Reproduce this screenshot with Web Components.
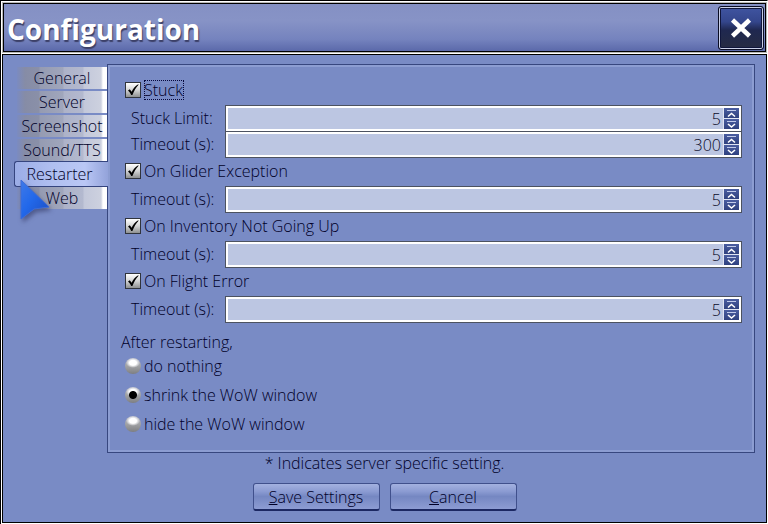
<!DOCTYPE html>
<html lang="en">
<head>
<meta charset="utf-8">
<title>Configuration</title>
<style>
  body { margin: 0; background: #000; color: #000028; font: 300 16px/20px "Open Sans", "Noto Sans", sans-serif; }
</style>
</head>
<body>
<script>
const define = (name, html, setup) => {
  const template = document.createElement('template');
  template.innerHTML = html;
  customElements.define(name, class extends HTMLElement {
    connectedCallback() {
      if (this.shadowRoot) return;
      const root = this.attachShadow({ mode: 'open' });
      root.append(template.content.cloneNode(true));
      if (setup) setup(this, root);
    }
  });
};

define('config-window', `
<style>
  :host { display: flex; flex-direction: column; min-height: 100vh; box-sizing: border-box;
    border: 1px solid #000; border-right-color: #fff; background: #fff; padding: 1px 0 1px 1px; }
  header { display: flex; align-items: center; justify-content: space-between; box-sizing: border-box; height: 49px;
    border: 1px solid #000; outline: 1px solid #b8b8b8; margin: 1px 1px 2px 1px; padding: 0 1px 0 3px;
    background: linear-gradient(#8490c4, #8793c6 35%, #7583be 75%, #5b69aa); }
  h1 { margin: 0; font-weight: 700; font-size: 28px; line-height: 40px; color: #fff; text-shadow: 1px 2px 1px #3c4068; padding-top: 2px; }
  .close { box-sizing: border-box; width: 46px; height: 44px; padding: 0; border: 1px solid #0a0d24; border-radius: 3px;
    box-shadow: inset 0 0 0 1px #c9cfe6, inset 0 0 0 2px #10163c;
    background: linear-gradient(#4055a2, #34468c 35%, #1f2850 55%, #272c42); }
  .close svg { display: block; margin: auto; }
  main { flex: 1; display: flex; flex-direction: column; border: 1px solid #000; background: #798bc5; padding: 9px 11px 11px 11px; }
  .body { flex: 1; display: flex; }
  .note { margin: 0; text-align: center; line-height: 20px; }
  footer { display: flex; justify-content: center; gap: 10px; margin-top: 10px; }
</style>
<header><h1><slot name="title"></slot></h1>
  <button class="close" aria-label="Close"><svg width="24" height="24" viewBox="0 0 24 24"><path d="M3.500 4 20.500 20M20.500 4 3.500 20" stroke="#fff" stroke-width="4.500"/></svg></button>
</header>
<main>
  <div class="body"><slot name="tabs"></slot><slot name="panel"></slot></div>
  <p class="note"><slot name="note"></slot></p>
  <footer><slot name="actions"></slot></footer>
</main>`);

define('tab-list', `
<style>
  :host { display: flex; flex-direction: column; gap: 2px; width: 93px; padding-top: 3px; position: relative; z-index: 1; }
</style><slot></slot>`);

define('tab-item', `
<style>
  :host { display: block; }
  button { display: block; box-sizing: border-box; width: 90px; height: 22px; margin: 0 0 0 3px; padding: 0; border: 0;
    font: inherit; color: inherit; text-align: center;
    background: linear-gradient(90deg, #7b8bc0, #868ca6 8px, #8a90a8 22px, #959bb2 23px, #a0a6bc 46px, #adb2c8 47px, #b3b9cf 66px, #c3c8da 67px, #cdd1df 84px, #fff 86px); }
  :host([selected]) { margin: -2px 0; }
  :host([selected]) button { width: 94px; height: 26px; margin: 0; padding-right: 4px; border: 1px solid #35457f; border-right: 0;
    border-radius: 3px 0 0 3px; background: linear-gradient(90deg, #9badE6, #b0bff0 40%, #bac7f5 75%, #93a3da); }
</style><button role="tab"><slot></slot></button>`);

define('settings-panel', `
<style>
  :host { display: block; flex: 1; box-sizing: border-box; border: 1px solid #37477f;
    box-shadow: inset 0 0 0 2px #8c9dd2; padding: 11px 12px 13px 13px; }
</style><slot></slot>`);

define('check-option', `
<style>
  :host { display: flex; align-items: center; height: 28px; margin-bottom: 1px; padding-left: 4px; gap: 3px; }
  input { appearance: none; flex: none; box-sizing: border-box; width: 16px; height: 16px; margin: 0; border: 1px solid #30343c;
    background: linear-gradient(#fff, #d4d5d5 50%, #8e9090); }
  .box { display: grid; }
  .box > * { grid-area: 1 / 1; }
  svg { pointer-events: none; }
  label { line-height: 20px; padding-right: 1px; }
  :host([focused]) label { outline: 1px dotted #06083c; outline-offset: -1px; }
</style>
<span class="box"><input type="checkbox" id="box" checked>
<svg width="16" height="16" viewBox="0 0 16 16"><path d="M3 8.500 4.800 7.200 6.600 9.800C8.200 6.400 10 4.200 13.200 2.200L13.600 2.800C10.800 5.600 9.200 8.600 7.400 13H6.200C5.400 11.200 4.400 9.800 3 8.500Z" fill="#000"/></svg></span>
<label for="box"><slot></slot></label>`, (host, root) => {
  const mark = root.querySelector('svg');
  root.querySelector('input').onchange = e => { mark.style.visibility = e.target.checked ? 'visible' : 'hidden'; };
});

define('number-field', `
<style>
  :host { display: flex; align-items: center; height: 26px; padding-left: 10px; }
  label { width: 94px; flex: none; }
  .field { flex: 1; display: flex; box-sizing: border-box; height: 27px; margin-bottom: -1px; border: 1px solid #4c5260; background: #bcc6e2;
    box-shadow: inset 0 0 0 2px #fff; padding: 2px; }
  input { flex: 1; min-width: 0; border: 0; padding: 0 2px 0 4px; background: none; font: inherit; color: #0a0a28; text-align: right; outline: 0; }
  .spin { display: flex; flex-direction: column; gap: 1px; padding-left: 1px; background: #dfe4f2; }
  button { flex: 1; display: grid; place-content: center; width: 15px; min-height: 0; padding: 0; border: 0; background: linear-gradient(#4a5da0, #2f417f); }
  svg { display: block; }
</style>
<label for="value"><slot></slot></label>
<div class="field"><input id="value" type="text" inputmode="numeric">
<div class="spin">
<button aria-label="Increase"><svg width="11" height="9" viewBox="0 0 11 9" fill="none" stroke="#fff"><path d="M1 1.500H10" stroke="#c0caea"/><path d="M2 7.500 5.500 4.500 9 7.500" stroke-width="1.600"/></svg></button>
<button aria-label="Decrease"><svg width="11" height="9" viewBox="0 0 11 9" fill="none" stroke="#fff"><path d="M1 1.500H10" stroke="#c0caea"/><path d="M2 4 5.500 7 9 4" stroke-width="1.600"/></svg></button>
</div></div>`, (host, root) => {
  const input = root.querySelector('input');
  input.value = host.getAttribute('value');
  const [up, down] = root.querySelectorAll('button');
  up.onclick = () => { input.value = Number(input.value) + 1; };
  down.onclick = () => { input.value = Math.max(0, Number(input.value) - 1); };
});

define('restart-choice', `
<style>
  :host { display: block; }
  fieldset { border: 0; margin: 10px 0 0; padding: 0; min-width: 0; }
  legend { padding: 0; line-height: 20px; }
  div { display: flex; align-items: center; height: 28px; margin-bottom: 1px; padding-left: 4px; gap: 3px; }
  input { appearance: none; width: 16px; height: 16px; margin: 0; border-radius: 50%;
    background: radial-gradient(ellipse 7px 5px at 50% 30%, #fff 50%, transparent), linear-gradient(#b5b9c8, #a2a3a6 50%, #7e7f82); }
  input:checked { background: radial-gradient(circle, #000 3.500px, transparent 4.500px),
    radial-gradient(ellipse 7px 5px at 50% 30%, #fff 50%, transparent), linear-gradient(#b5b9c8, #a2a3a6 50%, #7e7f82); }
</style>
<fieldset><legend>After restarting,</legend>
<div><input type="radio" name="after" id="none"><label for="none">do nothing</label></div>
<div><input type="radio" name="after" id="shrink" checked><label for="shrink">shrink the WoW window</label></div>
<div><input type="radio" name="after" id="hide"><label for="hide">hide the WoW window</label></div>
</fieldset>`);

define('action-button', `
<style>
  :host { display: block; }
  button { display: block; box-sizing: border-box; width: 127px; height: 28px; padding: 0; border: 1px solid #40508c; border-bottom: 2px solid #1c2862;
    border-radius: 3px; font: inherit; color: inherit;
    background: linear-gradient(#a3b1e0, #8b9bd2 30%, #7587c2 50%, #8d9cd3); }
</style><button><slot></slot></button>`);

define('pointer-arrow', `
<style>
  :host { position: absolute; left: 18px; top: 178px; z-index: 5; pointer-events: none; }
  svg { display: block; overflow: visible; filter: drop-shadow(2px 3px 2px #333a6699); }
</style>
<svg width="34" height="44" viewBox="0 0 34 44"><defs><linearGradient id="g" x1="0" y1="0" x2="1" y2="1"><stop offset="0" stop-color="#3f7ae8"/><stop offset=".45" stop-color="#2268ea"/><stop offset="1" stop-color="#1c4cc0"/></linearGradient></defs>
<path d="M3 2 31 29 16 31 3 41Z" fill="url(#g)" stroke="#3d6cd8" stroke-width="1" stroke-linejoin="round"/></svg>`);
</script>

<config-window>
  <span slot="title">Configuration</span>
  <tab-list slot="tabs" role="tablist">
    <tab-item>General</tab-item>
    <tab-item>Server</tab-item>
    <tab-item>Screenshot</tab-item>
    <tab-item>Sound/TTS</tab-item>
    <tab-item selected>Restarter</tab-item>
    <tab-item>Web</tab-item>
  </tab-list>
  <settings-panel slot="panel">
    <check-option focused>Stuck</check-option>
    <number-field value="5">Stuck Limit:</number-field>
    <number-field value="300">Timeout (s):</number-field>
    <check-option>On Glider Exception</check-option>
    <number-field value="5">Timeout (s):</number-field>
    <check-option>On Inventory Not Going Up</check-option>
    <number-field value="5">Timeout (s):</number-field>
    <check-option>On Flight Error</check-option>
    <number-field value="5">Timeout (s):</number-field>
    <restart-choice></restart-choice>
  </settings-panel>
  <span slot="note">* Indicates server specific setting.</span>
  <action-button slot="actions"><u>S</u>ave Settings</action-button>
  <action-button slot="actions"><u>C</u>ancel</action-button>
</config-window>
<pointer-arrow></pointer-arrow>
</body>
</html>
